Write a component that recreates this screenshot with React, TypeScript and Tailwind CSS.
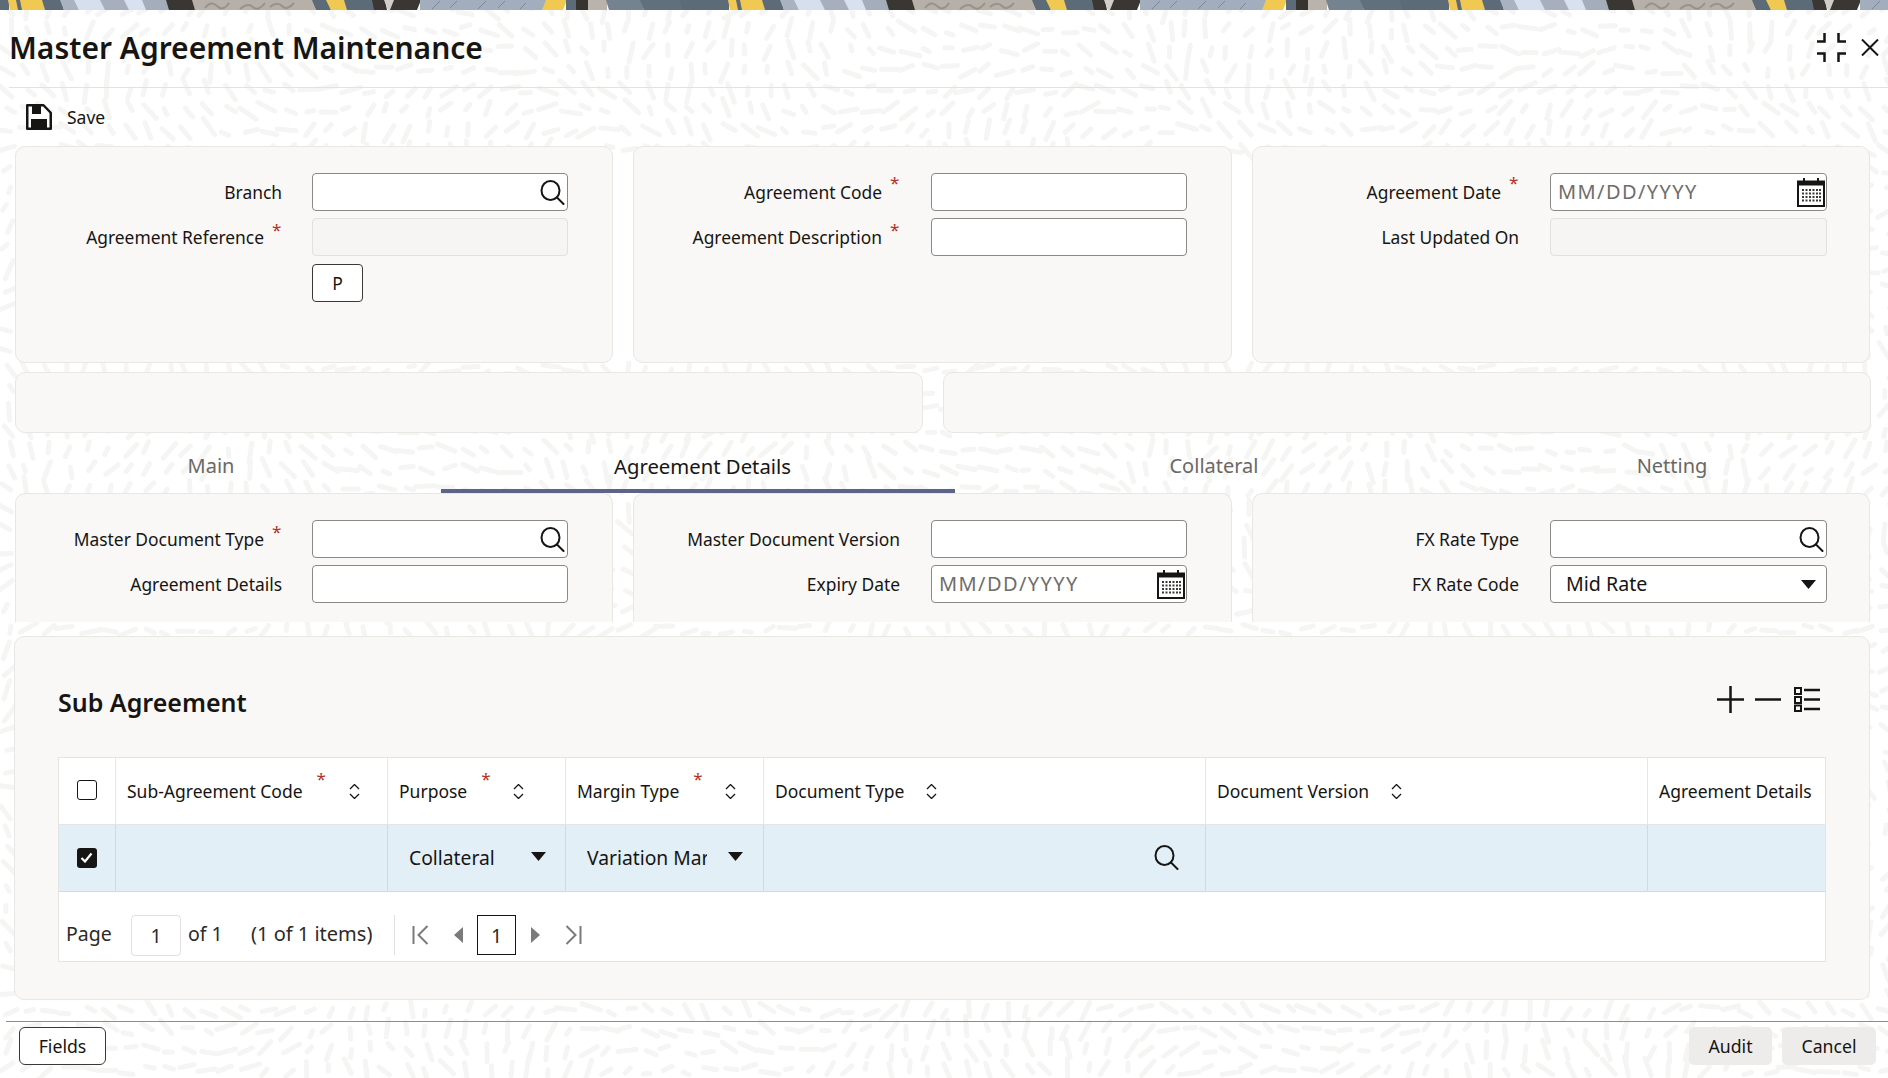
import React from 'react';

const TEXT = 'text-[#161513]';
const PANEL = 'bg-[#f9f8f6] border border-[#e9e7e4]';

// repeating strip along the top edge, x positions taken over one 720px period
const BANNER: [number, number, string, number][] = [
  [0, 8, '#5d6b78', 0],
  [8, 16, '#f0c952', 2],
  [16, 20, '#5d6b78', 2],
  [20, 42, '#f0c952', 2],
  [42, 60, '#5d6b78', 3],
  [60, 74, '#a9b3c0', 4],
  [74, 100, '#d5dfee', 5],
  [100, 124, '#a6afbb', 5],
  [124, 142, '#d7e1f0', 5],
  [142, 166, '#a4aebb', 4],
  [166, 192, '#3a3633', 3],
  [192, 312, '#b6b0a8', 3],
  [312, 326, '#5d6b78', 4],
  [326, 344, '#f0c952', 5],
  [344, 372, '#5d6b78', 3],
  [372, 384, '#3a3633', 2],
  [384, 394, '#d2cdc6', 4],
  [394, 420, '#3a3633', -4],
  [420, 546, '#a2adbd', 0],
  [546, 566, '#f0c952', -4],
  [566, 576, '#5d6b78', 0],
  [576, 588, '#37332f', 0],
  [588, 606, '#b9b3ab', 0],
  [606, 640, '#75828f', 3],
  [640, 680, '#62707c', 4],
  [680, 720, '#5d6b78', 2],
];

const Banner = () => (
  <svg width="1888" height="10" className="block shrink-0">
    {[0, 720, 1440].map((offset) => (
      <g key={offset} transform={`translate(${offset} 0)`}>
        {BANNER.map(([a, b, color, slant]) => (
          <polygon key={a} points={`${a},0 ${b + 1},0 ${b + 1 + slant},10 ${a + slant},10`} fill={color} />
        ))}
        <path d="M205 8q6-8 12-2t12-3M240 9q8-7 13-2t12-4M270 7q7-6 12-1t12-3" fill="none" stroke="#98928b" strokeWidth="2" />
        <path d="M432 9l8-8M450 8l7-7M478 9l8-8M498 8l7-7M520 9l6-6" fill="none" stroke="#7d8796" strokeWidth="1" />
      </g>
    ))}
  </svg>
);

// soft dash texture of the page background
const textureDashes = (() => {
  let seed = 7;
  const rnd = () => {
    seed = (seed * 16807) % 2147483647;
    return seed / 2147483647;
  };
  const parts: string[] = [];
  for (let y = 6; y < 1078; y += 20) {
    for (let x = 4; x < 1888; x += 20) {
      if (y > 150 && y < 360 && x > 20 && x < 1860) continue;
      if (y > 640 && y < 1000 && x > 20 && x < 1860) continue;
      const angle = Math.sin(x / 90) * 1.1 + Math.cos(y / 70) * 1.2 + (rnd() - 0.5) * 0.9;
      const len = 3 + rnd() * 7;
      const px = x + rnd() * 8;
      const py = y + rnd() * 8;
      const dx = Math.cos(angle) * len;
      const dy = Math.sin(angle) * len;
      parts.push(`M${(px - dx).toFixed(1)} ${(py - dy).toFixed(1)}L${(px + dx).toFixed(1)} ${(py + dy).toFixed(1)}`);
    }
  }
  return parts.join('');
})();

const SearchIcon = () => (
  <svg width="25" height="25" viewBox="0 0 25 25" fill="none" stroke="#161513" strokeWidth="2" strokeLinecap="round">
    <ellipse cx="10.5" cy="10.5" rx="9" ry="9.5" />
    <path d="M17 17.5l6.5 6.5" />
  </svg>
);

const CalendarIcon = () => (
  <svg width="28" height="29" viewBox="0 0 28 29" fill="none">
    <path d="M7 0v6M21 0v6" stroke="#161513" strokeWidth="2" />
    <rect x="1" y="3.5" width="26" height="24.5" stroke="#161513" strokeWidth="2" />
    <rect x="1" y="3.5" width="26" height="4" fill="#161513" />
    {[11, 14.5, 18, 21.5].map((y) =>
      [5, 8.5, 12, 15.5, 19, 22].map((x) => <rect key={`${x}-${y}`} x={x} y={y} width="2" height="2" fill="#3b3936" />)
    )}
  </svg>
);

const Caret = () => (
  <svg width="15" height="9" viewBox="0 0 15 9">
    <path d="M0 0h15L7.5 9z" fill="#161513" />
  </svg>
);

const SortIcon = () => (
  <svg width="11" height="15" viewBox="0 0 11 15" fill="none" stroke="#161513" strokeWidth="1.3">
    <path d="M1 5l4.5-4.500L10 5M1 10l4.500 4.500L10 10" />
  </svg>
);

type FieldProps = {
  label: string;
  required?: boolean;
  width: string;
  children?: React.ReactNode;
  disabled?: boolean;
  raised?: boolean;
};

const Field = ({ label, required, width, children, disabled, raised }: FieldProps) => (
  <div className="flex items-center gap-[31px]">
    <div className="flex h-[38px] w-[266px] shrink-0 items-center justify-end">
      <span className={`mb-[1px] text-[17.400px] leading-[24px] ${TEXT}`}>{label}</span>
      {required && (
        <span
          className={`ml-[8px] w-[10px] self-start text-[17px] leading-[20px] text-[#b3311f] ${raised ? 'mt-0' : 'mt-[2px]'}`}
        >
          *
        </span>
      )}
    </div>
    <div
      className={`flex h-[38px] items-center justify-between rounded-[4px] border ${width} ${
        disabled ? 'border-[#e2e0dd] bg-[#f6f5f3]' : 'border-[#8b8987] bg-white'
      }`}
    >
      {children}
    </div>
  </div>
);

const SearchInner = () => (
  <>
    <span />
    <span className="mr-[2px] flex">
      <SearchIcon />
    </span>
  </>
);

const DateInner = () => (
  <>
    <span className="pl-[7px] text-[20px] tracking-[1.400px] text-[#6f6d6b]">MM/DD/YYYY</span>
    <span className="mr-[1px] flex">
      <CalendarIcon />
    </span>
  </>
);

const COLUMNS = 'grid grid-cols-[56px_272px_178px_198px_442px_442px_178px]';
const HEADER_CELL = 'flex items-center border-l border-[#e9e7e4] pl-[11px]';
const ROW_CELL = 'flex items-center border-l border-[#cfdbe2]';

const HeaderLabel = ({ text, required, gap }: { text: string; required?: boolean; gap: string }) => (
  <>
    <span className={`text-[17.500px] ${TEXT}`}>{text}</span>
    {required && <span className="mb-[24px] ml-[14px] w-[10px] text-[17px] leading-[20px] text-[#b3311f]">*</span>}
    <span className={`flex ${gap}`}>
      <SortIcon />
    </span>
  </>
);

const Tab = ({ label, width, active, className }: { label: string; width: string; active?: boolean; className?: string }) => (
  <div
    className={`flex h-[60px] items-center justify-center border-b-[4px] pt-[10px] ${width} ${className ?? ''} ${
      active ? 'border-[#5c6488] text-[20.300px] text-[#161513]' : 'border-transparent text-[20px] text-[#6a6866]'
    }`}
  >
    {label}
  </div>
);

const PagerIcon = ({ d, w }: { d: string; w: number }) => (
  <svg width={w} height="20" viewBox={`0 0 ${w} 20`} fill="none" stroke="#7d7b79" strokeWidth="2">
    <path d={d} />
  </svg>
);

export default function App() {
  return (
    <div
      className={`relative h-[1078px] w-[1888px] overflow-hidden bg-white ${TEXT}`}
      style={{ fontFamily: '"Noto Sans", "Open Sans", sans-serif' }}
    >
      <svg width="1888" height="1078" className="absolute inset-0">
        <path d={textureDashes} stroke="#f5f5f4" strokeWidth="5" strokeLinecap="round" fill="none" />
      </svg>

      <div className="relative flex h-full flex-col">
        <Banner />

        {/* title bar */}
        <div className="ml-[9px] flex h-[78px] shrink-0 items-center justify-between border-b border-[#e4e2df] pb-[2px]">
          <h1 className={`text-[30px] font-semibold leading-none ${TEXT}`}>Master Agreement Maintenance</h1>
          <div className="mr-[9px] flex items-center gap-[15px]">
            <svg width="29" height="29" viewBox="0 0 29 29" fill="none" stroke="#161513" strokeWidth="2.500">
              <path d="M0 8.500h7.500V0M21.500 0v8.500H29M0 20.500h7.500V29M21.500 29v-8.500H29" />
            </svg>
            <svg width="18" height="17" viewBox="0 0 18 17" fill="none" stroke="#161513" strokeWidth="2">
              <path d="M1 .5l16 16M17 .5L1 16.500" />
            </svg>
          </div>
        </div>

        {/* toolbar */}
        <div className="flex h-[58px] shrink-0 items-center gap-[15px] pl-[26px]">
          <svg width="26" height="26" viewBox="0 0 26 26">
            <path d="M1.250 1.250H17.500l7.250 7.500v16H1.250z" fill="#fff" stroke="#161513" strokeWidth="2.500" strokeLinejoin="round" />
            <path d="M6 1h9v9H6zM5 15h16v10H5z" fill="#161513" />
          </svg>
          <span className="text-[17.500px]">Save</span>
        </div>

        {/* reference fields */}
        <div className="flex h-[217px] shrink-0 gap-[20px] pl-[15px]">
          <div className={`flex w-[598px] flex-col gap-[7px] rounded-[10px] pt-[26px] ${PANEL}`}>
            <Field label="Branch" width="-ml-[1px] w-[256px]">
              <SearchInner />
            </Field>
            <Field label="Agreement Reference" required width="-ml-[1px] w-[256px]" disabled />
            <div className="ml-[296px] mt-[1px] flex h-[38px] w-[51px] items-center justify-center rounded-[4px] border border-[#3b3936] bg-white text-[17.500px]">
              P
            </div>
          </div>
          <div className={`flex w-[599px] flex-col gap-[7px] rounded-[10px] pt-[26px] ${PANEL}`}>
            <Field label="Agreement Code" required raised width="w-[256px]" />
            <Field label="Agreement Description" required width="w-[256px]" />
          </div>
          <div className={`flex w-[618px] flex-col gap-[7px] rounded-[10px] pt-[26px] ${PANEL}`}>
            <Field label="Agreement Date" required raised width="w-[277px]">
              <DateInner />
            </Field>
            <Field label="Last Updated On" width="w-[277px]" disabled />
          </div>
        </div>

        {/* empty band */}
        <div className="mt-[9px] flex h-[61px] shrink-0 gap-[20px] pl-[15px]">
          <div className={`w-[908px] rounded-[10px] ${PANEL}`} />
          <div className={`w-[928px] rounded-[10px] ${PANEL}`} />
        </div>

        {/* tabs */}
        <div className="flex shrink-0 pl-[15px]">
          <Tab label="Main" width="w-[426px]" className="pr-[34px]" />
          <Tab label="Agreement Details" width="w-[514px]" active className="pl-[9px]" />
          <Tab label="Collateral" width="w-[518px]" />
          <Tab label="Netting" width="w-[398px]" />
        </div>

        {/* tab body */}
        <div className="flex h-[129px] shrink-0 gap-[20px] pl-[15px]">
          <div className={`flex w-[598px] flex-col gap-[7px] rounded-t-[10px] border-b-0 pt-[26px] ${PANEL}`}>
            <Field label="Master Document Type" required width="-ml-[1px] w-[256px]">
              <SearchInner />
            </Field>
            <Field label="Agreement Details" width="-ml-[1px] w-[256px]" />
          </div>
          <div className={`flex w-[599px] flex-col gap-[7px] rounded-t-[10px] border-b-0 pt-[26px] ${PANEL}`}>
            <Field label="Master Document Version" width="w-[256px]" />
            <Field label="Expiry Date" width="w-[256px]">
              <DateInner />
            </Field>
          </div>
          <div className={`flex w-[618px] flex-col gap-[7px] rounded-t-[10px] border-b-0 pt-[26px] ${PANEL}`}>
            <Field label="FX Rate Type" width="w-[277px]">
              <SearchInner />
            </Field>
            <Field label="FX Rate Code" width="w-[277px]">
              <span className="pl-[15px] text-[19.600px]">Mid Rate</span>
              <span className="mr-[10px] flex">
                <Caret />
              </span>
            </Field>
          </div>
        </div>

        {/* sub agreement */}
        <div className={`ml-[14px] mt-[14px] h-[364px] w-[1856px] shrink-0 rounded-[10px] pl-[43px] pr-[43px] ${PANEL}`}>
          <div className="flex h-[120px] items-center justify-between pr-[1px] pt-[10px]">
            <h2 className="text-[25px] font-semibold leading-none">Sub Agreement</h2>
            <div className="mb-[5px] flex items-center gap-[11px] pr-[5px]">
              <svg width="27" height="27" viewBox="0 0 27 27" stroke="#161513" strokeWidth="2.500">
                <path d="M13.500 0v27M0 13.500h27" />
              </svg>
              <svg width="26" height="27" viewBox="0 0 26 27" stroke="#161513" strokeWidth="2.500" className="mr-[2px]">
                <path d="M0 13.500h26" />
              </svg>
              <svg width="26" height="25" viewBox="0 0 26 25" fill="none" stroke="#161513" strokeWidth="2">
                <path d="M1 1h6v6H1zM1 10h6v6H1zM1 18.500h6v5.500H1z" />
                <path d="M10 3h16M10 12.500h16M10 22h16" strokeWidth="2.500" />
              </svg>
            </div>
          </div>

          <div className="w-[1768px] border border-[#e6e4e1] bg-white">
            <div className={`${COLUMNS} h-[67px] border-b border-[#e2e5e7]`}>
              <div className="flex items-center justify-center pb-[2px] pr-[1px]">
                <span className="h-[20px] w-[20px] rounded-[3px] border-[1.500px] border-[#161513] bg-white" />
              </div>
              <div className={HEADER_CELL}>
                <HeaderLabel text="Sub-Agreement Code" required gap="ml-[22px]" />
              </div>
              <div className={HEADER_CELL}>
                <HeaderLabel text="Purpose" required gap="ml-[22px]" />
              </div>
              <div className={HEADER_CELL}>
                <HeaderLabel text="Margin Type" required gap="ml-[22px]" />
              </div>
              <div className={HEADER_CELL}>
                <HeaderLabel text="Document Type" gap="ml-[22px]" />
              </div>
              <div className={HEADER_CELL}>
                <HeaderLabel text="Document Version" gap="ml-[22px]" />
              </div>
              <div className={`${HEADER_CELL} text-[17.500px]`}>Agreement Details</div>
            </div>

            <div className={`${COLUMNS} h-[67px] border-b border-[#cfdbe2] bg-[#e3eff6]`}>
              <div className="flex items-center justify-center pb-[1px] pr-[1px]">
                <span className="flex h-[20px] w-[20px] items-center justify-center rounded-[3px] bg-[#161513]">
                  <svg width="13" height="11" viewBox="0 0 13 11" fill="none" stroke="#fff" strokeWidth="2.200">
                    <path d="M1.500 6l3.500 3.500L11.500 1.500" />
                  </svg>
                </span>
              </div>
              <div className={ROW_CELL} />
              <div className={`${ROW_CELL} pl-[21px]`}>
                <span className="w-[122px] text-[19.300px]">Collateral</span>
                <span className="mb-[4px] flex">
                  <Caret />
                </span>
              </div>
              <div className={`${ROW_CELL} pl-[21px]`}>
                <span className="w-[120px] overflow-hidden whitespace-nowrap text-[19.300px]">Variation Margin</span>
                <span className="mb-[4px] ml-[21px] flex">
                  <Caret />
                </span>
              </div>
              <div className={`${ROW_CELL} justify-end pb-[2px] pr-[26px]`}>
                <SearchIcon />
              </div>
              <div className={ROW_CELL} />
              <div className={ROW_CELL} />
            </div>

            <div className="flex h-[69px] items-center pl-[7px] pt-[17px] text-[19.500px] leading-none text-[#2b2a28]">
              <span className="mb-[3px] w-[45px]">Page</span>
              <span className="ml-[20px] flex h-[41px] w-[50px] items-center justify-center rounded-[4px] border border-[#e2e0dd] pt-[2px]">
                1
              </span>
              <span className="mb-[3px] ml-[7px] w-[35px] whitespace-nowrap">of 1</span>
              <span className="mb-[3px] ml-[28px] w-[122px] whitespace-nowrap text-[20px]">(1 of 1 items)</span>
              <span className="ml-[21px] h-[40px] w-px bg-[#e2e0dd]" />
              <span className="ml-[17px] flex">
                <PagerIcon w={17} d="M1.500 1v18M15.500 1l-9 9 9 9" />
              </span>
              <span className="ml-[25px] flex">
                <svg width="9" height="16" viewBox="0 0 9 16">
                  <path d="M9 0v16L0 8z" fill="#7d7b79" />
                </svg>
              </span>
              <span className="ml-[14px] flex h-[40px] w-[39px] items-center justify-center border border-[#161513] pt-[2px]">
                1
              </span>
              <span className="ml-[15px] flex">
                <svg width="9" height="16" viewBox="0 0 9 16">
                  <path d="M0 0v16l9-8z" fill="#7d7b79" />
                </svg>
              </span>
              <span className="ml-[25px] flex">
                <PagerIcon w={17} d="M1.500 1l9 9-9 9M15.500 1v18" />
              </span>
            </div>
          </div>
        </div>

        {/* footer */}
        <div className="ml-[6px] mt-[21px] flex flex-1 items-start justify-between border-t border-[#8f8d8b] pl-[13px] pr-[12px] pt-[5px]">
          <div className="flex h-[38px] w-[87px] items-center justify-center rounded-[6px] border border-[#3b3936] bg-white text-[17.700px]">
            Fields
          </div>
          <div className="flex gap-[10px]">
            <div className="flex h-[38px] w-[83px] items-center justify-center rounded-[5px] bg-[#eeecea] text-[17.700px]">Audit</div>
            <div className="flex h-[38px] w-[94px] items-center justify-center rounded-[5px] bg-[#eeecea] text-[17.700px]">Cancel</div>
          </div>
        </div>
      </div>
    </div>
  );
}
